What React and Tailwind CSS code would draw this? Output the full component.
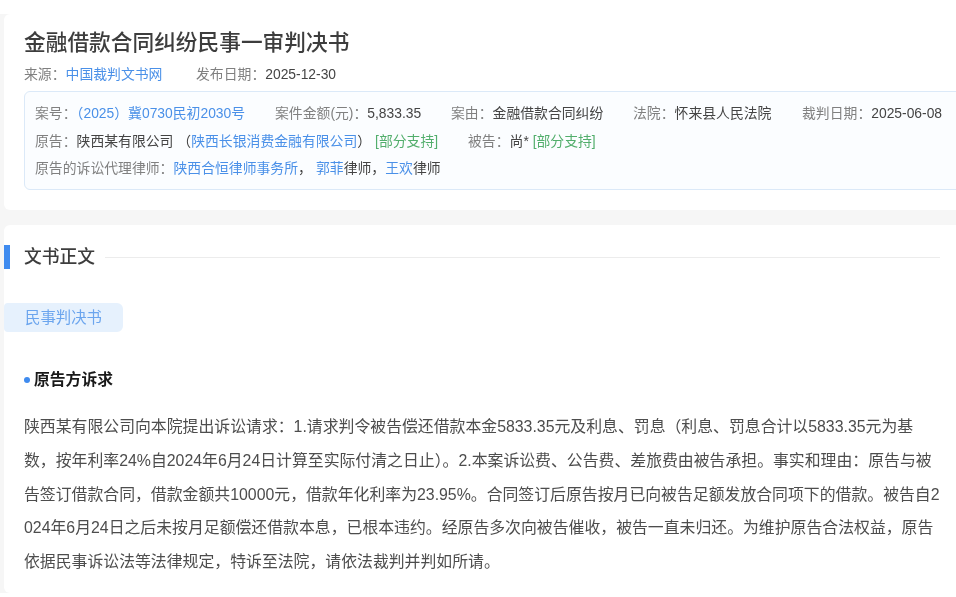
const FONT = "font-['Liberation_Sans','Noto_Sans_CJK_SC',sans-serif]";

function Label({ children }) {
  return <span className="text-[#808080]">{children}</span>;
}
function Link({ children }) {
  return <span className="text-[#4a90e8]">{children}</span>;
}
function Val({ children }) {
  return <span className="text-[#444444]">{children}</span>;
}
function Green({ children }) {
  return <span className="text-[#52ae6c]">{children}</span>;
}

const lines = [
  "陕西某有限公司向本院提出诉讼请求：1.请求判令被告偿还借款本金5833.35元及利息、罚息（利息、罚息合计以5833.35元为基",
  "数，按年利率24%自2024年6月24日计算至实际付清之日止）。2.本案诉讼费、公告费、差旅费由被告承担。事实和理由：原告与被",
  "告签订借款合同，借款金额共10000元，借款年化利率为23.95%。合同签订后原告按月已向被告足额发放合同项下的借款。被告自2",
  "024年6月24日之后未按月足额偿还借款本息，已根本违约。经原告多次向被告催收，被告一直未归还。为维护原告合法权益，原告",
  "依据民事诉讼法等法律规定，特诉至法院，请依法裁判并判如所请。",
];

const marks = [];
for (let i = -5; i <= 6; i++) {
  for (let j = -8; j <= 8; j++) {
    const x = 630 + 155 * i + 57 * j;
    const y = 300 - 42 * i + 55 * j;
    if (x > 45 && x < 911 && y > 40 && y < 557) marks.push({ x, y });
  }
}

export default function App() {
  return (
    <div className={`relative w-[956px] h-[597px] overflow-hidden bg-white ${FONT}`}>
      <div className="blur-[0.35px] mt-[14px] h-[579px] bg-[#f6f6f6] pl-1 absolute inset-x-0 top-0">
        <div className="w-[970px] h-[196px] bg-white rounded-md pl-5 pt-[14px]">
          <h1 className="text-[21.7px] leading-[30px] font-medium text-[#3d3d3d] whitespace-nowrap">金融借款合同纠纷民事一审判决书</h1>
          <div className="mt-[6px] flex text-[13.85px] leading-5 whitespace-nowrap">
            <span className="w-[172px]"><Label>来源：</Label><Link>中国裁判文书网</Link></span>
            <span><Label>发布日期：</Label><Val>2025-12-30</Val></span>
          </div>
          <div className="mt-[7px] w-[960px] h-[99px] rounded-md border border-[#dbe9f8] bg-[#fbfdff] pl-[10px] pt-[8px] text-[13.85px] leading-[27.5px] whitespace-nowrap">
            <div className="flex">
              <span className="w-[240px]"><Label>案号：</Label><Link>（2025）冀0730民初2030号</Link></span>
              <span className="w-[176px]"><Label>案件金额(元)：</Label><Val>5,833.35</Val></span>
              <span className="w-[182px]"><Label>案由：</Label><Val>金融借款合同纠纷</Val></span>
              <span className="w-[169px]"><Label>法院：</Label><Val>怀来县人民法院</Val></span>
              <span><Label>裁判日期：</Label><Val>2025-06-08</Val></span>
            </div>
            <div className="flex">
              <span className="w-[433px]">
                <Label>原告：</Label><Val>陕西某有限公司</Val><Val> （</Val><Link>陕西长银消费金融有限公司</Link><Val>）</Val> <Green>[部分支持]</Green>
              </span>
              <span><Label>被告：</Label><Val>尚*</Val> <Green>[部分支持]</Green></span>
            </div>
            <div>
              <Label>原告的诉讼代理律师：</Label><Link>陕西合恒律师事务所</Link><Val>，</Val>
              <span className="ml-[4px]"><Link>郭菲</Link></span><Val>律师，</Val><Link>王欢</Link><Val>律师</Val>
            </div>
          </div>
        </div>

        <div className="mt-[15px] w-[970px] h-[368px] bg-white rounded-md pt-5">
          <div className="flex items-center h-6">
            <div className="w-[6px] h-6 bg-[#3f8bef]" />
            <h2 className="ml-[14px] text-[17.8px] font-medium text-[#3d3d3d] leading-6 whitespace-nowrap">文书正文</h2>
            <div className="ml-[10px] w-[835px] h-px bg-[#ececec]" />
          </div>
          <div className="mt-[34px] w-[119px] h-[29px] rounded-r-md rounded-l-sm bg-[#e6f1fd] pl-[21px] text-[15.4px] leading-[29px] text-[#6ba5ee]">民事判决书</div>
          <div className="mt-[36px] ml-5 flex items-center text-[15.8px] font-bold text-[#1a1a1a] leading-6">
            <span className="w-[6px] h-[6px] rounded-full bg-[#3f8bef] mr-1" />
            原告方诉求
          </div>
          <div className="mt-[18px] ml-5 text-[15.86px] leading-[33.8px] text-[#4d4d4d] whitespace-nowrap">
            {lines.map((l) => <div key={l}>{l}</div>)}
          </div>
        </div>
      </div>
      {marks.map((m) => (
        <span
          key={`${m.x}-${m.y}`}
          className="absolute -translate-x-1/2 -translate-y-1/2 -rotate-[42deg] text-[14px] font-bold tracking-[4px] text-black/[0.025] whitespace-nowrap pointer-events-none"
          style={{ left: m.x, top: m.y }}
        >
          EE8OPS9
        </span>
      ))}
    </div>
  );
}
